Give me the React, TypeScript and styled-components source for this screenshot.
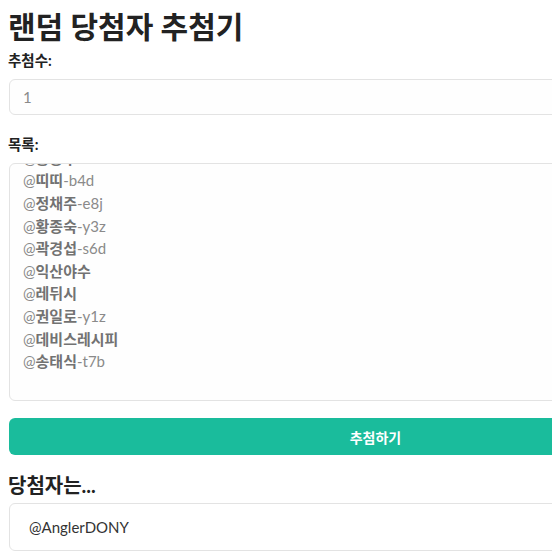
import { useEffect, useRef } from "react";
import styled, { createGlobalStyle } from "styled-components";

const GlobalStyle = createGlobalStyle`
  html, body {
    overflow: hidden;
  }
  body {
    margin: 8px;
    background: #fff;
    color: #363636;
    font-family: Lato, "Noto Sans CJK KR", sans-serif;
  }
`;

const Page = styled.main`
  width: 733px;
  display: flex;
  flex-direction: column;
`;

const Title = styled.h1`
  margin: 0 0 7px;
  font-size: 30px;
  line-height: 36px;
  font-weight: 700;
  color: #222;
`;

const Label = styled.label`
  display: block;
  font-size: 14.5px;
  line-height: 20px;
  font-weight: 700;
  color: #222;
  margin-bottom: 8px;
`;

const Field = styled.input`
  box-sizing: border-box;
  width: 100%;
  height: 36px;
  margin: 0 0 20px 1px;
  padding: 0 13px;
  border: 1px solid #e3e3e3;
  border-radius: 6px;
  background: #fefefe;
  font-family: inherit;
  font-size: 15px;
  color: #363636;
  outline: none;

  &::placeholder {
    color: #8a8a8a;
  }
`;

const ListBox = styled.div`
  box-sizing: border-box;
  width: 100%;
  height: 238px;
  margin: 0 0 17px 1px;
  padding: 10px 13px;
  border: 1px solid #e3e3e3;
  border-radius: 6px;
  background: #fefefe;
  overflow: hidden;
  font-size: 15px;
  line-height: 22.6px;
  color: #8a8a8a;
`;

const Entry = styled.div``;

const Name = styled.span`
  font-weight: 700;
  color: #727272;
`;

const DrawButton = styled.button`
  width: 100%;
  height: 37px;
  margin: 0 0 17px 1px;
  border: none;
  border-radius: 6px;
  background: #1abc9c;
  color: #fff;
  font-family: inherit;
  font-size: 14px;
  font-weight: 700;
  cursor: pointer;
`;

const ResultTitle = styled.h3`
  margin: 0 0 5px;
  font-size: 20px;
  line-height: 26px;
  font-weight: 700;
  color: #222;
`;

const ResultBox = styled.div`
  box-sizing: border-box;
  width: 100%;
  height: 48px;
  margin-left: 1px;
  padding: 0 19px;
  display: flex;
  align-items: center;
  border: 1px solid #e3e3e3;
  border-radius: 6px;
  background: #fff;
  font-size: 15px;
  color: #333;
`;

const entries: [string, string][] = [
  ["김민수", "-a2c"],
  ["이상우", "-k5r"],
  ["박준영", "-m9q"],
  ["홍승우", "-x2k"],
  ["띠띠", "-b4d"],
  ["정채주", "-e8j"],
  ["황종숙", "-y3z"],
  ["곽경섭", "-s6d"],
  ["익산야수", ""],
  ["레뒤시", ""],
  ["권일로", "-y1z"],
  ["데비스레시피", ""],
  ["송태식", "-t7b"],
];

export default function App() {
  const listRef = useRef<HTMLDivElement>(null);

  useEffect(() => {
    if (listRef.current) {
      listRef.current.scrollTop = 3 * 22.6 + 27;
    }
  }, []);

  return (
    <>
      <GlobalStyle />
      <Page>
        <Title>랜덤 당첨자 추첨기</Title>
        <Label htmlFor="count">추첨수:</Label>
        <Field id="count" type="number" placeholder="1" />
        <Label>목록:</Label>
        <ListBox ref={listRef}>
          {entries.map(([name, tag]) => (
            <Entry key={name}>
              @<Name>{name}</Name>
              {tag}
            </Entry>
          ))}
          <Entry>&nbsp;</Entry>
          <Entry>&nbsp;</Entry>
        </ListBox>
        <DrawButton>추첨하기</DrawButton>
        <ResultTitle>당첨자는...</ResultTitle>
        <ResultBox>@AnglerDONY</ResultBox>
      </Page>
    </>
  );
}
